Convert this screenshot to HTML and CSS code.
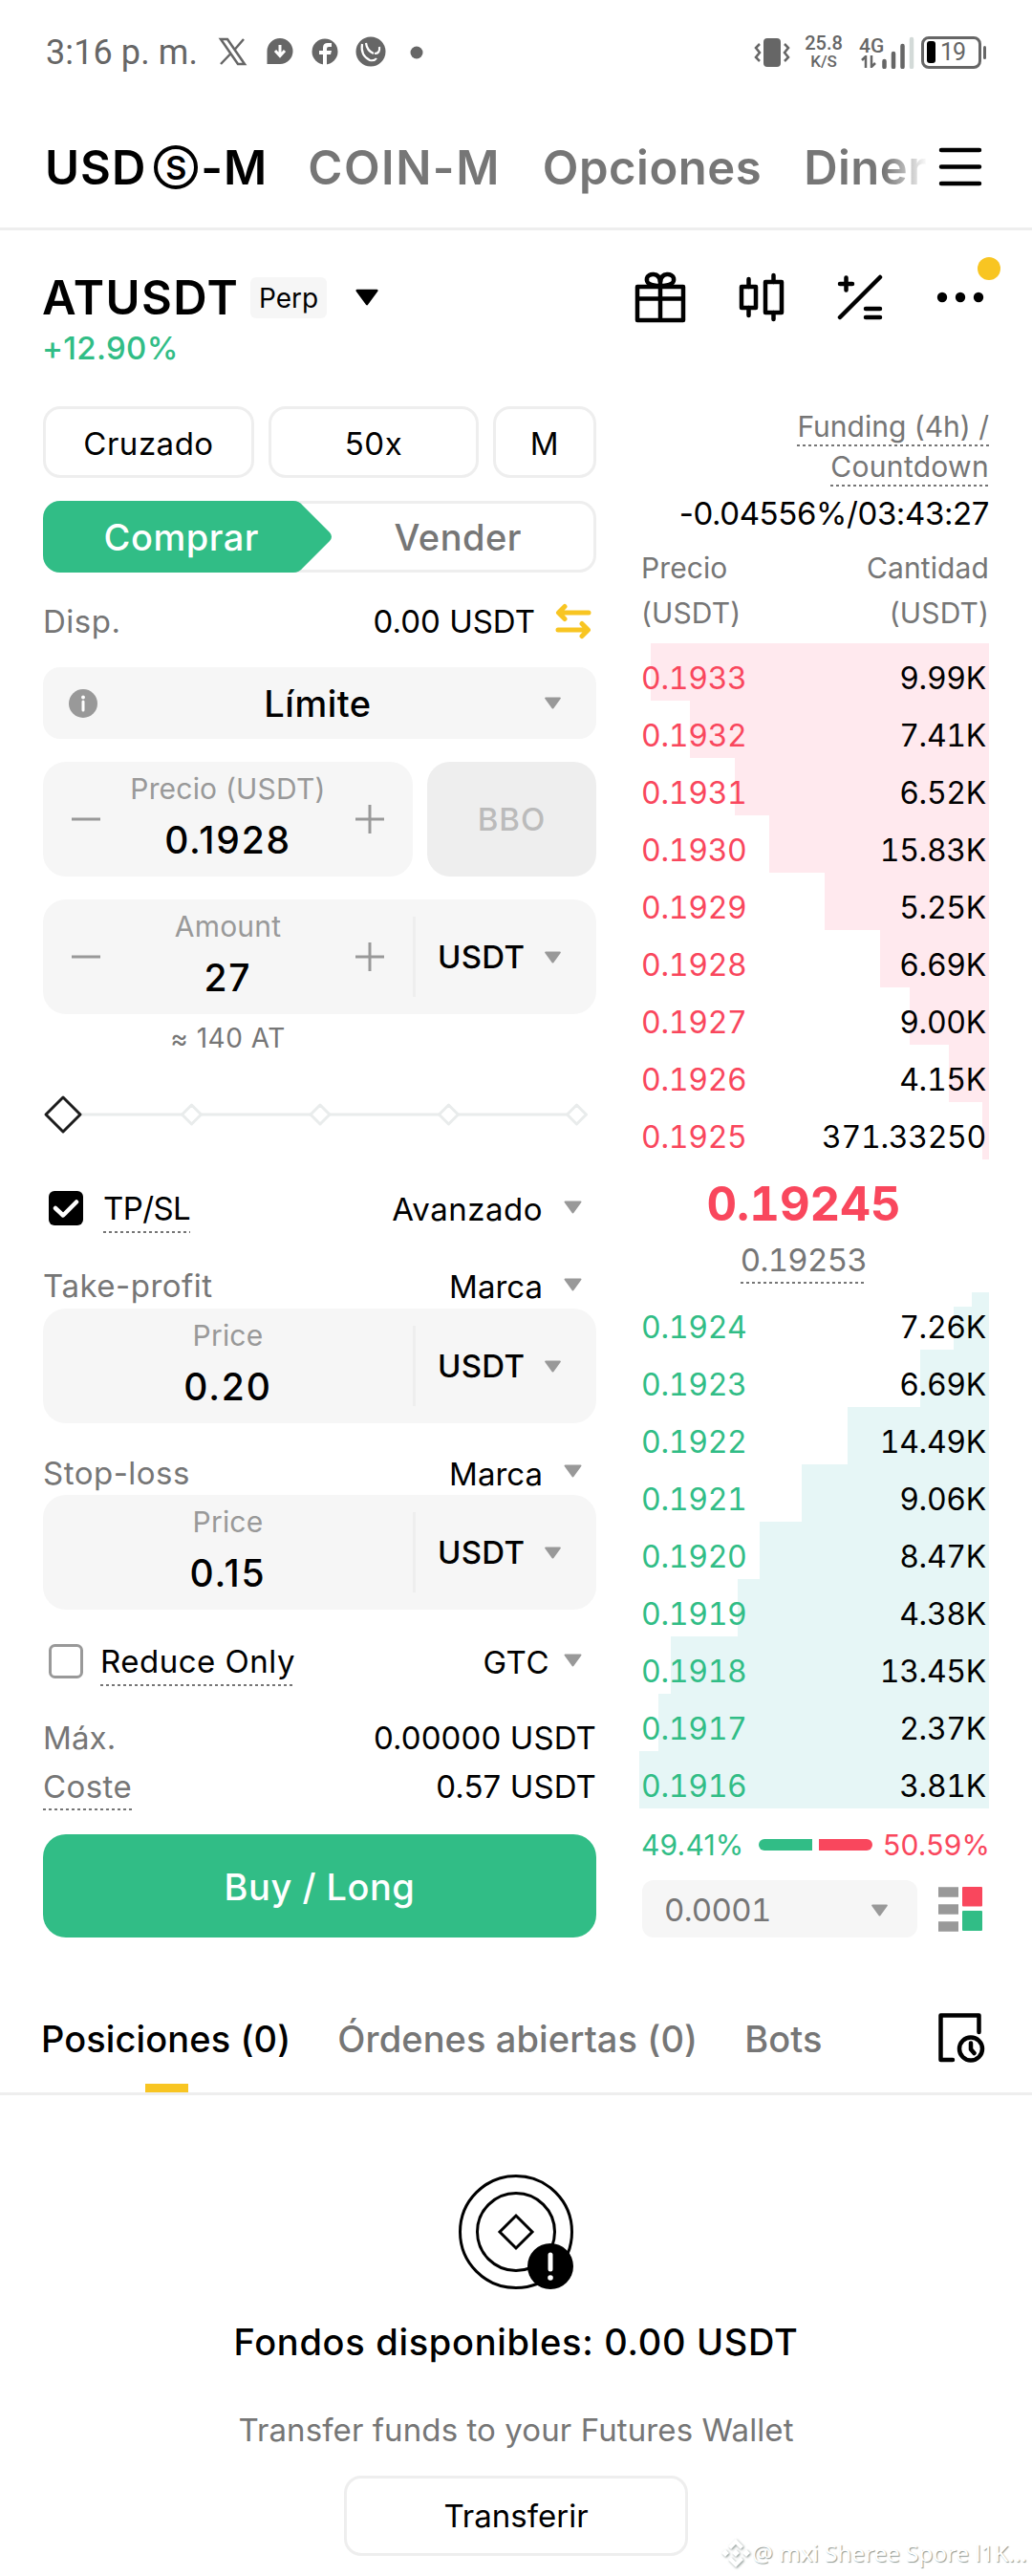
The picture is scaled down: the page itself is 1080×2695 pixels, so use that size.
FILE: index.html
```
<!DOCTYPE html>
<html lang="es">
<head>
    <meta charset="UTF-8" />
    <meta name="viewport" content="width=device-width, initial-scale=1.0"/>
    <title>ATUSDT Perp - Futuros</title>
    <link rel="stylesheet" href="styles.css">
</head>
<body>
    <!-- Iconos reutilizables -->
    <svg class="sprite" aria-hidden="true">
        <symbol id="caret" viewBox="0 0 20 14">
            <path d="M2 1.500h16L10 12.500z" fill="currentColor" stroke="currentColor" stroke-width="2" stroke-linejoin="round"/>
        </symbol>
        <symbol id="minus" viewBox="0 0 30 36">
            <path d="M0 18h30" stroke="currentColor" stroke-width="3"/>
        </symbol>
        <symbol id="plus" viewBox="0 0 30 36">
            <path d="M0 18h30M15 3v30" stroke="currentColor" stroke-width="3"/>
        </symbol>
    </svg>

    <div class="status-bar">
        <span class="clock">3:16 p. m.</span>
        <svg class="apps" width="220" height="36" viewBox="0 0 220 36">
            <path d="M3 4h7l18 26h-7zM27 4L17 15.500M14 18.500L3 30" fill="none" stroke="#666" stroke-width="2.500"/>
            <path d="M65 3a13.500 13.500 0 1 1 0 27H51.500V16.500A13.500 13.500 0 0 1 65 3z" fill="#666"/>
            <path d="M65 10v10M60 16l5 5.500 5-5.500" fill="none" stroke="#fff" stroke-width="3"/>
            <circle cx="112" cy="17" r="13.500" fill="#666"/>
            <path d="M110 31V20h-4v-4h4v-3q0-5 5-5h4v4h-3q-2 0-2 2v2h5l-1 4h-4v11z" fill="#fff"/>
            <circle cx="160" cy="17" r="15.500" fill="#666"/>
            <path d="M151 9q-2 12 8 17q5 1 7-2M155 8q1 8 8 11M164 19q6 0 5-7" fill="none" stroke="#fff" stroke-width="2.200"/>
            <circle cx="208" cy="18" r="6.500" fill="#666"/>
        </svg>
        <svg class="vibrate" width="38" height="34" viewBox="0 0 38 34">
            <rect x="10" y="2" width="18" height="30" rx="4" fill="#666"/>
            <path d="M6 8l-4 4 4 5-4 5 4 4M32 8l4 4-4 5 4 5-4 4" fill="none" stroke="#666" stroke-width="2.500"/>
        </svg>
        <span class="speed">25.8<small>K/S</small></span>
        <span class="net">4G
            <svg width="16" height="13" viewBox="0 0 16 13"><path d="M5 13V1L1 5M11 0v12l4-4" fill="none" stroke="#666" stroke-width="2.500"/></svg>
        </span>
        <svg class="bars" width="34" height="34" viewBox="0 0 34 34">
            <path d="M2.500 26v6M12 18v14M21.500 10v22" stroke="#666" stroke-width="4.500" stroke-linecap="round"/>
            <path d="M31 3v29" stroke="#d3dad8" stroke-width="4.500" stroke-linecap="round"/>
        </svg>
        <span class="battery"><i></i>19</span>
    </div>

    <nav class="top-nav">
        <a class="active">USD<span class="coin-s">S</span>-M</a>
        <a class="coin-m">COIN-M</a>
        <a>Opciones</a>
        <a class="faded">Diner</a>
        <svg class="burger" width="46" height="42" viewBox="0 0 46 42">
            <path d="M3 3h40M3 20.500h40M3 38h40" stroke="#000" stroke-width="4.500" stroke-linecap="round"/>
        </svg>
    </nav>

    <header class="pair">
        <div class="pair-info">
            <div class="pair-name">
                <h1>ATUSDT</h1>
                <span class="badge">Perp</span>
                <svg class="pair-caret" width="28" height="18"><use href="#caret"/></svg>
            </div>
            <div class="change">+12.90%</div>
        </div>
        <div class="tools">
            <svg width="54" height="56" viewBox="0 0 54 56" fill="none" stroke="#000" stroke-width="4.500" stroke-linejoin="round">
                <rect x="3" y="17" width="48" height="35"/>
                <path d="M3 29.500h48M27 10v42"/>
                <path d="M27 16c-11 0-15-3-14-8s13-7 14 4M27 16c11 0 15-3 14-8s-13-7-14 4"/>
            </svg>
            <svg width="48" height="52" viewBox="0 0 48 52" fill="none" stroke="#000" stroke-width="4.500" stroke-linejoin="round" stroke-linecap="round">
                <rect x="3" y="15" width="15" height="22"/>
                <rect x="28" y="10" width="17" height="32"/>
                <path d="M10.500 7v8M10.500 37v8M36.500 3v7M36.500 42v7"/>
            </svg>
            <svg width="48" height="50" viewBox="0 0 48 50" fill="none" stroke="#000" stroke-width="4.500" stroke-linecap="round">
                <path d="M3 46L45 4M3 11h13M9.500 4.500v13M30 37h15M30 46h15"/>
            </svg>
            <span class="more">
                <svg width="50" height="12" viewBox="0 0 50 12"><circle cx="6" cy="6" r="5.200"/><circle cx="25" cy="6" r="5.200"/><circle cx="44" cy="6" r="5.200"/></svg>
            </span>
        </div>
    </header>

    <main class="trade">
        <!-- Formulario de orden -->
        <section class="order-form">
            <div class="modes">
                <button>Cruzado</button>
                <button>50x</button>
                <button>M</button>
            </div>

            <div class="side-toggle">
                <svg class="side-shape" width="303" height="75" viewBox="0 0 303 75">
                    <path d="M18 0H262Q268 0 272 5L300 33Q304 37.500 300 42L272 70Q268 75 262 75H18A18 18 0 0 1 0 57V18A18 18 0 0 1 18 0z" fill="#31bd86"/>
                </svg>
                <span class="buy">Comprar</span>
                <span class="sell">Vender</span>
            </div>

            <div class="row available">
                <span class="muted">Disp.</span>
                <span class="available-value">0.00 USDT
                    <svg width="38" height="38" viewBox="0 0 38 38" fill="none" stroke="#f8c522" stroke-width="5" stroke-linecap="round" stroke-linejoin="round">
                        <path d="M35 10H4M10 3.500L3.500 10l6.500 6.500M3 28h31M28 21.500l6.500 6.500-6.500 6.500"/>
                    </svg>
                </span>
            </div>

            <div class="select-type">
                <svg width="30" height="30" viewBox="0 0 30 30"><circle cx="15" cy="15" r="15" fill="#999"/><path d="M15 13v9" stroke="#fff" stroke-width="3" stroke-linecap="round"/><circle cx="15" cy="8.500" r="1.900" fill="#fff"/></svg>
                <strong>Límite</strong>
                <svg class="caret" width="19" height="13"><use href="#caret"/></svg>
            </div>

            <div class="price-row">
                <div class="field stepper">
                    <svg width="30" height="36"><use href="#minus"/></svg>
                    <div class="field-text"><label>Precio (USDT)</label><b>0.1928</b></div>
                    <svg width="30" height="36"><use href="#plus"/></svg>
                </div>
                <button class="bbo">BBO</button>
            </div>

            <div class="field with-unit">
                <div class="stepper">
                    <svg width="30" height="36"><use href="#minus"/></svg>
                    <div class="field-text"><label>Amount</label><b>27</b></div>
                    <svg width="30" height="36"><use href="#plus"/></svg>
                </div>
                <div class="unit">USDT <svg class="caret" width="19" height="13"><use href="#caret"/></svg></div>
            </div>
            <div class="approx">≈ 140 AT</div>

            <svg class="slider" width="579" height="110" viewBox="0 0 579 110" fill="#fff" stroke="#e9ecec" stroke-width="3" stroke-linejoin="round">
                <path d="M21 55h537"/>
                <path d="M155.500 45l10 10-10 10-10-10zM290 45l10 10-10 10-10-10zM424.500 45l10 10-10 10-10-10zM558.500 45l10 10-10 10-10-10z"/>
                <path d="M21 37l18 18-18 18L3 55z" stroke="#1c1c1c"/>
            </svg>

            <div class="row option">
                <span class="check">
                    <svg width="36" height="36" viewBox="0 0 36 36"><rect width="36" height="36" rx="6"/><path d="M7 18l8 7.500L29 11.500" fill="none" stroke="#fff" stroke-width="4.500" stroke-linecap="round" stroke-linejoin="round"/></svg>
                    <span class="dotted tpsl">TP/SL</span>
                </span>
                <span class="picker">Avanzado <svg class="caret" width="21" height="14"><use href="#caret"/></svg></span>
            </div>

            <div class="row tp-head">
                <span class="muted">Take-profit</span>
                <span class="picker marca">Marca <svg class="caret" width="21" height="14"><use href="#caret"/></svg></span>
            </div>
            <div class="field with-unit">
                <div class="field-text"><label>Price</label><b>0.20</b></div>
                <div class="unit">USDT <svg class="caret" width="19" height="13"><use href="#caret"/></svg></div>
            </div>

            <div class="row sl-head">
                <span class="muted">Stop-loss</span>
                <span class="picker marca">Marca <svg class="caret" width="21" height="14"><use href="#caret"/></svg></span>
            </div>
            <div class="field with-unit">
                <div class="field-text"><label>Price</label><b>0.15</b></div>
                <div class="unit">USDT <svg class="caret" width="19" height="13"><use href="#caret"/></svg></div>
            </div>

            <div class="row option reduce">
                <span class="check">
                    <svg width="36" height="36" viewBox="0 0 36 36"><rect x="1.500" y="1.500" width="33" height="33" rx="5" fill="none" stroke="#999" stroke-width="3"/></svg>
                    <span class="dotted">Reduce Only</span>
                </span>
                <span class="picker gtc">GTC <svg class="caret" width="21" height="14"><use href="#caret"/></svg></span>
            </div>

            <div class="row total"><span class="muted">Máx.</span><span>0.00000 USDT</span></div>
            <div class="row total"><span class="muted dotted">Coste</span><span>0.57 USDT</span></div>

            <button class="submit">Buy / Long</button>
        </section>

        <!-- Libro de órdenes -->
        <section class="book">
            <div class="funding">
                <span class="dotted">Funding (4h) /</span>
                <span class="dotted">Countdown</span>
            </div>
            <div class="funding-value">-0.04556%/03:43:27</div>

            <div class="book-head">
                <span>Precio<br>(USDT)</span>
                <span>Cantidad<br>(USDT)</span>
            </div>

            <div class="levels asks">
                <div style="background-size: 354px 100%"><span>0.1933</span><span>9.99K</span></div>
                <div style="background-size: 313px 100%"><span>0.1932</span><span>7.41K</span></div>
                <div style="background-size: 266px 100%"><span>0.1931</span><span>6.52K</span></div>
                <div style="background-size: 230px 100%"><span>0.1930</span><span>15.83K</span></div>
                <div style="background-size: 172px 100%"><span>0.1929</span><span>5.25K</span></div>
                <div style="background-size: 114px 100%"><span>0.1928</span><span>6.69K</span></div>
                <div style="background-size: 83px 100%"><span>0.1927</span><span>9.00K</span></div>
                <div style="background-size: 42px 100%"><span>0.1926</span><span>4.15K</span></div>
                <div style="background-size: 7px 100%"><span>0.1925</span><span>371.33250</span></div>
            </div>

            <div class="last">
                <strong>0.19245</strong>
                <span class="dotted">0.19253</span>
            </div>

            <div class="levels bids">
                <div class="first" style="background-size: 18px 100%, 37px 45px"><span>0.1924</span><span>7.26K</span></div>
                <div style="background-size: 72px 100%"><span>0.1923</span><span>6.69K</span></div>
                <div style="background-size: 148px 100%"><span>0.1922</span><span>14.49K</span></div>
                <div style="background-size: 196px 100%"><span>0.1921</span><span>9.06K</span></div>
                <div style="background-size: 240px 100%"><span>0.1920</span><span>8.47K</span></div>
                <div style="background-size: 263px 100%"><span>0.1919</span><span>4.38K</span></div>
                <div style="background-size: 333px 100%"><span>0.1918</span><span>13.45K</span></div>
                <div style="background-size: 346px 100%"><span>0.1917</span><span>2.37K</span></div>
                <div style="background-size: 366px 100%"><span>0.1916</span><span>3.81K</span></div>
            </div>

            <div class="ratio">
                <span class="up">49.41%</span>
                <i class="ratio-buy"></i>
                <i class="ratio-sell"></i>
                <span class="down">50.59%</span>
            </div>

            <div class="book-foot">
                <div class="tick">0.0001 <svg class="caret" width="19" height="13"><use href="#caret"/></svg></div>
                <svg width="46" height="47" viewBox="0 0 46 47">
                    <path d="M0 5.500h21M0 23.500h21M0 41.500h21" stroke="#999" stroke-width="10.500"/>
                    <rect x="25" y="0" width="21" height="20.500" rx="1" fill="#f9475d"/>
                    <rect x="25" y="25" width="21" height="21" rx="1" fill="#31bd86"/>
                </svg>
            </div>
        </section>
    </main>

    <nav class="tabs">
        <a class="active">Posiciones (0)</a>
        <a>Órdenes abiertas (0)</a>
        <a>Bots</a>
        <svg width="50" height="54" viewBox="0 0 50 54" fill="none" stroke="#000" stroke-width="4.500" stroke-linecap="round" stroke-linejoin="round">
            <path d="M43.500 21V3.500H3.500V50H16"/>
            <circle cx="35" cy="38.500" r="12"/>
            <path d="M35 32.500V39l3.500 4"/>
        </svg>
    </nav>

    <section class="empty">
        <svg width="120" height="120" viewBox="0 0 120 120" fill="none" stroke="#000" stroke-width="3">
            <circle cx="60" cy="60" r="58.500"/>
            <circle cx="60" cy="60" r="40.500"/>
            <path d="M60 43l17 17-17 17-17-17z"/>
            <circle cx="96" cy="96" r="24" fill="#000" stroke="none"/>
            <path d="M96 84v15" stroke="#fff" stroke-width="5" stroke-linecap="round"/>
            <circle cx="96" cy="108" r="2.800" fill="#fff" stroke="none"/>
        </svg>
        <h2>Fondos disponibles: 0.00 USDT</h2>
        <p>Transfer funds to your Futures Wallet</p>
        <button>Transferir</button>
    </section>

    <div class="watermark">
        <svg width="30" height="32" viewBox="0 0 30 32" fill="#fff">
            <path d="M15 1l8 8-3 3-5-5-5 5-3-3zM15 31l8-8-3-3-5 5-5-5-3 3zM4 12l4 4-4 4-4-4zM26 12l4 4-4 4-4-4zM15 12l4 4-4 4-4-4z"/>
        </svg>
        <span>@ mxi Sheree Spore l1K...</span>
    </div>
</body>
</html>
```
FILE: styles.css
```
* {
    box-sizing: border-box;
}

body {
    margin: 0;
    position: relative;
    width: 1080px;
    height: 2695px;
    overflow: hidden;
    background: #fff;
    color: #000;
    font-family: Inter, 'Open Sans', sans-serif;
    font-size: 33px;
    letter-spacing: 0.5px;
}

svg {
    display: block;
    flex: none;
}

button {
    font: inherit;
    letter-spacing: inherit;
    color: inherit;
    padding: 0;
    background: #fff;
    border: 3px solid #eee;
    border-radius: 18px;
}

.sprite {
    position: absolute;
    width: 0;
    height: 0;
}

.caret {
    color: #999;
}

.muted {
    color: #767676;
}

/* subrayado punteado de los textos con ayuda */
.dotted {
    background: repeating-linear-gradient(90deg, #767676 0 3px, transparent 3px 6px) bottom / 100% 2px no-repeat;
}

/* BARRA DE ESTADO */
.status-bar {
    display: flex;
    align-items: center;
    height: 109px;
    padding-left: 48px;
    font-family: Roboto, sans-serif;
    color: #666;
    letter-spacing: 0;
}

.clock {
    width: 180px;
    font-size: 36px;
    letter-spacing: 0.1px;
    white-space: nowrap;
}

.vibrate {
    margin-left: 341px;
}

.speed {
    width: 42px;
    margin-left: 14px;
    font-size: 20px;
    line-height: 19px;
    font-weight: 500;
    text-align: center;
}

.speed small {
    display: block;
    font-size: 17px;
}

.net {
    width: 30px;
    margin-left: 16px;
    font-size: 21px;
    line-height: 19px;
    font-weight: 500;
}

.net svg {
    margin-left: 2px;
}

.bars {
    margin-left: -6px;
}

.battery {
    position: relative;
    display: flex;
    align-items: center;
    gap: 5px;
    width: 63px;
    height: 34px;
    margin-left: 7px;
    padding-left: 3px;
    border: 3px solid #666;
    border-radius: 8px;
    font-size: 25px;
    letter-spacing: -1px;
}

.battery i {
    width: 9px;
    height: 23px;
    border-radius: 3px;
    background: #000;
}

.battery::after {
    content: '';
    position: absolute;
    right: -8px;
    top: 7px;
    width: 3px;
    height: 14px;
    border-radius: 2px;
    background: #666;
}

/* NAVEGACIÓN SUPERIOR */
.top-nav {
    display: flex;
    align-items: center;
    height: 132px;
    padding: 3px 0 0 47px;
    border-bottom: 3px solid #eee;
    font-size: 49px;
    font-weight: 600;
    color: #767676;
}

.top-nav a {
    display: flex;
    align-items: center;
    margin-right: 44px;
}

.top-nav .active {
    margin-right: 42px;
    color: #000;
    letter-spacing: 1px;
}

.top-nav .coin-m {
    letter-spacing: 1.5px;
}

.coin-s {
    display: flex;
    align-items: center;
    justify-content: center;
    width: 46px;
    height: 46px;
    margin: 0 3px 0 8px;
    border: 4px solid #000;
    border-radius: 50%;
    font-size: 34px;
    letter-spacing: 0;
}

.top-nav .faded {
    width: 130px;
    margin-right: 0;
    color: transparent;
    background: linear-gradient(90deg, #767676 65%, #fff);
    background-clip: text;
    -webkit-background-clip: text;
}

.burger {
    margin-left: 11px;
}

/* PAR */
.pair {
    display: flex;
    justify-content: space-between;
    height: 184px;
    padding: 36px 50px 0 44px;
}

.pair-name {
    display: flex;
    align-items: center;
    height: 68px;
}

.pair h1 {
    width: 218px;
    margin: 0;
    font-size: 49px;
    font-weight: 600;
    letter-spacing: 1.4px;
}

.badge {
    width: 80px;
    height: 43px;
    border-radius: 6px;
    background: #f6f6f6;
    font-size: 28px;
    line-height: 45px;
    text-align: center;
    letter-spacing: 0;
}

.pair-caret {
    margin-left: 28px;
}

.change {
    line-height: 38px;
    font-weight: 500;
    color: #31bd86;
    letter-spacing: 0.3px;
}

.tools {
    display: flex;
    align-items: center;
    gap: 55px;
    height: 68px;
}

.more {
    position: relative;
    margin-left: 1px;
}

.more::after {
    content: '';
    position: absolute;
    right: -17px;
    top: -36px;
    width: 24px;
    height: 24px;
    border-radius: 50%;
    background: #f8c522;
}

/* FORMULARIO */
.trade {
    display: flex;
    gap: 45px;
    padding-left: 45px;
    height: 1602px;
}

.order-form {
    width: 579px;
}

.modes {
    display: grid;
    grid-template-columns: 221px 220px 108px;
    gap: 15px;
    height: 75px;
    margin-bottom: 24px;
}

.modes button {
    padding-top: 2px;
}

.side-toggle {
    position: relative;
    display: flex;
    align-items: center;
    height: 75px;
    border-radius: 18px;
    box-shadow: inset 0 0 0 3px #eee;
    font-size: 38px;
    font-weight: 500;
}

.side-shape {
    position: absolute;
    left: 0;
    top: 0;
}

.side-toggle span {
    position: relative;
    width: 290px;
    text-align: center;
}

.buy {
    color: #fff;
}

.sell {
    color: #767676;
}

.row {
    display: flex;
    align-items: center;
    justify-content: space-between;
}

.available {
    height: 99px;
    padding: 2px 5px 0 0;
}

.available-value {
    display: flex;
    align-items: center;
    gap: 21px;
    letter-spacing: 0;
}

.select-type {
    display: flex;
    align-items: center;
    justify-content: space-between;
    height: 75px;
    padding: 0 36px 0 27px;
    border-radius: 18px;
    background: #f6f6f6;
    font-size: 38px;
}

.select-type strong {
    margin-right: 6px;
    font-weight: 500;
}

.price-row {
    display: flex;
    gap: 15px;
    margin: 24px 0;
}

.field {
    height: 120px;
    border-radius: 24px;
    background: #f6f6f6;
}

.stepper {
    display: flex;
    align-items: center;
    justify-content: space-between;
    width: 387px;
    height: 120px;
    padding: 0 30px;
    color: #999;
}

.field-text {
    text-align: center;
}

.field-text label {
    display: block;
    font-size: 30px;
    line-height: 56px;
    color: #999;
    letter-spacing: 0.2px;
}

.field-text b {
    display: block;
    height: 64px;
    font-size: 39px;
    line-height: 51px;
    font-weight: 500;
    color: #000;
    letter-spacing: 1.8px;
}

.bbo {
    flex: 1;
    border: 0;
    border-radius: 24px;
    background: #eee;
    color: #bbb;
    font-weight: 500;
    letter-spacing: 1px;
}

.with-unit {
    display: flex;
    align-items: center;
}

.with-unit > .field-text {
    width: 387px;
}

.unit {
    display: flex;
    align-items: center;
    justify-content: space-between;
    width: 192px;
    height: 84px;
    padding: 0 36px 0 23px;
    border-left: 3px solid #eee;
    font-weight: 500;
    letter-spacing: 0.3px;
}

.approx {
    width: 387px;
    height: 50px;
    font-size: 28px;
    line-height: 50px;
    color: #767676;
    text-align: center;
}

.option {
    height: 86px;
}

.check {
    display: flex;
    align-items: center;
    gap: 18px;
    padding-left: 6px;
}

.check .dotted {
    line-height: 52px;
}

.check .tpsl {
    margin-left: 3px;
    letter-spacing: -0.6px;
}

.picker {
    display: flex;
    align-items: center;
    gap: 21px;
    padding: 2px 14px 0 0;
}

.picker .caret {
    margin-top: -5px;
}

.marca {
    letter-spacing: 0;
}

.gtc {
    gap: 14px;
}

.tp-head {
    height: 62px;
    padding-top: 14px;
}

.sl-head {
    height: 75px;
    padding-top: 28px;
}

.reduce {
    height: 108px;
}

.total {
    height: 51px;
    letter-spacing: 0.1px;
}

.total .dotted {
    line-height: 50px;
    letter-spacing: 0.4px;
}

.submit {
    width: 100%;
    height: 108px;
    margin-top: 25px;
    padding-top: 2px;
    border: 0;
    border-radius: 24px;
    background: #31bd86;
    color: #fff;
    font-size: 38px;
    font-weight: 500;
}

/* LIBRO DE ÓRDENES */
.book {
    width: 366px;
}

.funding {
    display: flex;
    flex-direction: column;
    align-items: flex-end;
    font-size: 30px;
    color: #767676;
    letter-spacing: 0;
}

.funding .dotted {
    height: 42px;
    line-height: 42px;
    background-position: 0 100%;
}

.funding .dotted:last-child {
    letter-spacing: 0.3px;
}

.funding-value {
    height: 62px;
    line-height: 56px;
    text-align: right;
    letter-spacing: -0.4px;
    white-space: nowrap;
}

.book-head {
    display: flex;
    justify-content: space-between;
    height: 102px;
    padding-left: 2px;
    font-size: 30px;
    line-height: 47px;
    color: #767676;
    letter-spacing: 0.1px;
}

.book-head span:last-child {
    text-align: right;
}

.levels div {
    display: flex;
    justify-content: space-between;
    height: 60px;
    padding: 12px 3px 0 2px;
    line-height: 50px;
    font-size: 32px;
    letter-spacing: -0.3px;
    font-feature-settings: 'tnum';
    background-position: 100% 0;
    background-repeat: no-repeat;
}

.asks div {
    background-image: linear-gradient(#ffe9ee, #ffe9ee);
}

.bids div {
    background-image: linear-gradient(#e6f6f6, #e6f6f6);
}

.bids .first {
    background-image: linear-gradient(#e6f6f6, #e6f6f6), linear-gradient(#e6f6f6, #e6f6f6);
    background-position: 100% 0, 100% 100%;
}

.asks span:first-child,
.down {
    color: #f9475d;
}

.bids span:first-child,
.up {
    color: #31bd86;
}

.last {
    display: flex;
    flex-direction: column;
    align-items: center;
    height: 139px;
    padding: 18px 22px 0 0;
    font-feature-settings: 'tnum';
}

.last strong {
    font-size: 49px;
    line-height: 57px;
    font-weight: 700;
    color: #f9475d;
    letter-spacing: 0;
}

.last .dotted {
    height: 55px;
    line-height: 60px;
    color: #767676;
    letter-spacing: -0.7px;
}

.ratio {
    display: flex;
    align-items: center;
    height: 75px;
    padding-left: 2px;
    font-size: 30px;
    letter-spacing: 0.2px;
    white-space: nowrap;
}

.ratio span {
    width: 110px;
}

.ratio i {
    width: 56px;
    height: 12px;
}

.ratio-buy {
    margin: 0 7px 0 13px;
    border-radius: 6px 0 0 6px;
    background: #31bd86;
}

.ratio-sell {
    margin-right: 11px;
    border-radius: 0 6px 6px 0;
    background: #f9475d;
}

.book-foot {
    display: flex;
    align-items: center;
    gap: 22px;
    padding-left: 3px;
}

.tick {
    display: flex;
    align-items: center;
    justify-content: space-between;
    width: 288px;
    height: 60px;
    padding: 2px 30px 0 23px;
    border-radius: 12px;
    background: #f6f6f6;
    color: #767676;
    letter-spacing: -0.7px;
    font-feature-settings: 'tnum';
}

/* PESTAÑAS */
.tabs {
    display: flex;
    height: 165px;
    padding: 77px 0 0 43px;
    border-bottom: 3px solid #eee;
    font-size: 38px;
    line-height: 58px;
    font-weight: 500;
    color: #767676;
    letter-spacing: 0.1px;
    white-space: nowrap;
}

.tabs a {
    margin-right: 49px;
}

.tabs .active {
    position: relative;
    color: #000;
}

.tabs .active::after {
    content: '';
    position: absolute;
    left: 50%;
    bottom: 0;
    width: 45px;
    height: 9px;
    margin-left: -22px;
    background: #f8c522;
}

.tabs svg {
    margin: 1px 49px 0 auto;
}

/* SIN POSICIONES */
.empty {
    display: flex;
    flex-direction: column;
    align-items: center;
    padding-top: 83px;
}

.empty h2 {
    margin: 31px 0 0;
    font-size: 38px;
    line-height: 48px;
    font-weight: 500;
    letter-spacing: 0.7px;
}

.empty p {
    margin: 44px 0 0;
    line-height: 48px;
    color: #767676;
    letter-spacing: 0.1px;
}

.empty button {
    width: 360px;
    height: 84px;
    margin-top: 24px;
    letter-spacing: 0;
}

.watermark {
    position: absolute;
    left: 755px;
    bottom: 8px;
    display: flex;
    align-items: center;
    gap: 2px;
    font-family: 'Noto Sans', sans-serif;
    font-size: 24.4px;
    color: #fff;
    letter-spacing: -0.1px;
    white-space: nowrap;
    text-shadow: 1px 1px 1px rgba(110, 125, 120, 0.8);
}

.watermark svg {
    filter: drop-shadow(1px 1px 1px rgba(110, 125, 120, 0.8));
}
```
